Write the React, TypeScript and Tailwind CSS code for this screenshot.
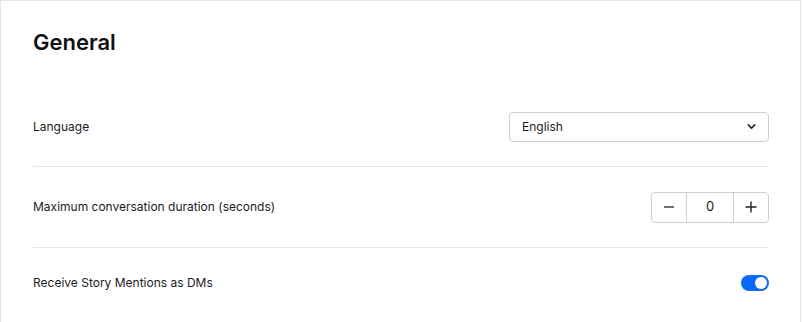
import React from "react";

export default function App() {
  return (
    <div
      className="w-[801px] h-[322px] bg-white border-t border-l border-r border-[#e5e5e5] pl-8 pr-[31px] pt-[26px] text-[#1c1c1c]"
      style={{ fontFamily: "Inter, 'Noto Sans', sans-serif" }}
    >
      <h1 className="text-[22px] leading-[30px] font-semibold text-[#111]">General</h1>
      <div className="mt-[30px]">
        <div className="flex items-center justify-between h-[80px] border-b border-[#e6e6e6]">
          <span className="text-[12px]">Language</span>
          <button className="w-[260px] h-[30px] border border-[#cfcfcf] rounded-[4px] flex items-center justify-between pl-3 pr-[10px] text-[12px] text-[#1c1c1c]">
            <span>English</span>
            <svg width="13" height="13" viewBox="0 0 24 24" fill="none" stroke="#222" strokeWidth="2.8" strokeLinecap="round" strokeLinejoin="round">
              <path d="M6 9l6 6 6-6" />
            </svg>
          </button>
        </div>
        <div className="flex items-center justify-between h-[81px] border-b border-[#e6e6e6]">
          <span className="text-[12px]">Maximum conversation duration (seconds)</span>
          <div className="flex h-[31px] border border-[#cfcfcf] rounded-[4px] text-[13px]">
            <div className="w-[35px] flex items-center justify-center border-r border-[#cfcfcf]">
              <svg width="14" height="14" viewBox="0 0 14 14"><path d="M2 7h10" stroke="#333" strokeWidth="1.4" /></svg>
            </div>
            <div className="w-[47px] flex items-center justify-center border-r border-[#cfcfcf]">0</div>
            <div className="w-[34px] flex items-center justify-center">
              <svg width="14" height="14" viewBox="0 0 14 14"><path d="M1.5 7h11M7 1.5v11" stroke="#222" strokeWidth="1.4" /></svg>
            </div>
          </div>
        </div>
        <div className="flex items-center justify-between h-[70px]">
          <span className="text-[12px]">Receive Story Mentions as DMs</span>
          <div className="w-[28px] h-[16px] rounded-full bg-[#0a6cf5] flex items-center justify-end pr-[2px]">
            <div className="w-[12px] h-[12px] rounded-full bg-white" />
          </div>
        </div>
      </div>
    </div>
  );
}
